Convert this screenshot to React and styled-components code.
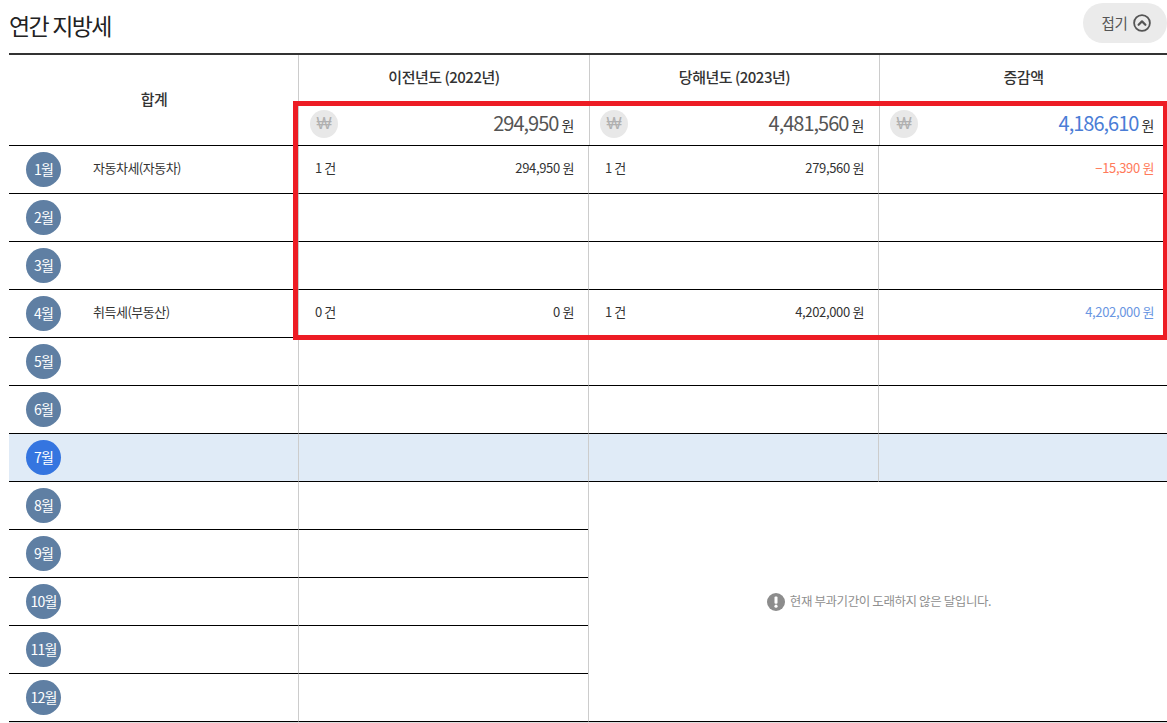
import React from "react";
import styled, { createGlobalStyle } from "styled-components";

const Global = createGlobalStyle`
  html, body { margin: 0; padding: 0; background: #fff; }
  body { font-family: "Noto Sans CJK KR", "Noto Sans", sans-serif; color: #333; overflow: hidden; }
  * { box-sizing: border-box; }
`;
const Page = styled.div`position: relative; width: 1167px; height: 723px; padding-left: 9px; overflow: hidden;`;
const TitleBar = styled.div`height: 53px; display: flex; justify-content: space-between; align-items: flex-start;`;
const Title = styled.h2`margin: 7px 0 0; font-size: 23px; line-height: 36px; font-weight: 400; color: #222; letter-spacing: -1.7px; word-spacing: 1px;`;
const FoldButton = styled.button`
  margin-top: 3px; width: 84px; height: 40px; border: 0; border-radius: 20px; background: #ebebeb;
  display: flex; align-items: center; justify-content: center; gap: 6px; padding: 0 0 0 3px;
  font: 400 14.5px "Noto Sans CJK KR", sans-serif; color: #555; letter-spacing: -0.4px;
`;
const FoldLabel = styled.span`margin-bottom: 2px;`;
const Head = styled.div`
  display: grid; grid-template-columns: 289px 291px 290px 288px; grid-template-rows: 46px 44px;
  border-top: 2px solid #333; border-bottom: 1px solid #000; box-sizing: content-box; height: 90px;
`;
const TotalHead = styled.div`
  grid-row: 1 / span 2; display: flex; align-items: center; justify-content: center;
  font-size: 15px; font-weight: 500; color: #333; padding: 0 0 3px 1px; letter-spacing: -0.5px;
`;
const ColHead = styled.div`
  border-left: 1px solid #ccc; display: flex; align-items: center; justify-content: center;
  font-size: 15px; font-weight: 500; color: #333; padding-bottom: 3px; letter-spacing: -0.5px;
`;
const SumCell = styled.div`
  border-left: 1px solid #ccc; display: flex; align-items: center; justify-content: space-between;
  padding: 2px ${p => (p.$last ? "13px" : "15px")} 0 ${p => (p.$first ? "11px" : "10px")};
`;
const WonBadge = styled.span`
  width: 28px; height: 28px; border-radius: 50%; background: #e8e8e8; color: #b0b0b0;
  display: flex; align-items: center; justify-content: center; font: 400 16px "Liberation Sans", sans-serif;
`;
const SumValue = styled.span`display: flex; align-items: baseline; gap: 3px; font-size: 14px; color: #333; margin-bottom: 4px; letter-spacing: -0.3px;`;
const SumNumber = styled.span`font-size: 20px; letter-spacing: -1px; color: ${p => p.$c || "#555"};`;
const Body = styled.div`
  display: grid; grid-template-columns: 289px 290px 290px 289px; grid-auto-rows: 48px; border-bottom: 1px solid #ddd;
`;
const MonthCell = styled.div`
  display: flex; align-items: center; padding-left: 17px; border-bottom: 1px solid #000;
  background: ${p => (p.$active ? "#e0ebf7" : "#fff")};
`;
const MonthBadge = styled.span`
  width: 35px; height: 35px; border-radius: 50%; flex: none; color: #fff; font-size: 14px; letter-spacing: -0.8px; padding-bottom: 2px;
  display: flex; align-items: center; justify-content: center; background: ${p => (p.$active ? "#3575e0" : "#5f7fa3")};
`;
const TaxName = styled.span`margin: 0 0 4px 32px; font-size: 13px; color: #333; letter-spacing: -0.5px;`;
const DataCell = styled.div`
  border-left: 1px solid #ccc; border-bottom: 1px solid #000; display: flex; align-items: center; justify-content: space-between;
  padding: 0 ${p => (p.$last ? "13px" : "14px")} 4px 16px; font-size: 13px; color: #333; letter-spacing: -0.35px;
  background: ${p => (p.$active ? "#e0ebf7" : "#fff")};
`;
const Count = styled.span`letter-spacing: -0.5px;`;
const Amount = styled.span`margin-left: auto; color: ${p => p.$c || "#333"};`;
const Notice = styled.div`
  grid-column: 3 / span 2; grid-row: 8 / span 5; border-left: 1px solid #ccc; border-bottom: 1px solid #000;
  display: flex; align-items: center; justify-content: center; gap: 5px; padding-left: 2px;
  font-size: 12.5px; color: #8f8f8f; letter-spacing: -0.4px;
`;
const NoticeText = styled.span`margin-bottom: 3px;`;
const Highlight = styled.div`
  position: absolute; left: 293px; top: 101px; width: 874px; height: 239px; border: 5px solid #ed1c24; border-right-width: 4px; pointer-events: none;
`;

const months = [
  { name: "자동차세(자동차)", a: ["1 건", "294,950 원"], b: ["1 건", "279,560 원"], d: ["−15,390 원", "#ff7a5a"] },
  {}, {},
  { name: "취득세(부동산)", a: ["0 건", "0 원"], b: ["1 건", "4,202,000 원"], d: ["4,202,000 원", "#6a96e2"] },
  {}, {}, { active: true }, {}, {}, {}, {}, {},
];

const Sum = ({ value, color, first, last }) => (
  <SumCell $first={first} $last={last}>
    <WonBadge>₩</WonBadge>
    <SumValue><SumNumber $c={color}>{value}</SumNumber>원</SumValue>
  </SumCell>
);

const Data = ({ v, active }) => (
  <DataCell $active={active}>
    {v && <Count>{v[0]}</Count>}
    {v && <Amount>{v[1]}</Amount>}
  </DataCell>
);

const Chevron = () => (
  <svg width="18" height="18" viewBox="0 0 18 18" fill="none" stroke="#555" strokeWidth="1.8">
    <circle cx="9" cy="9" r="7.9" />
    <path d="M5.6 10.8 9 7.4l3.4 3.4" strokeLinecap="round" strokeLinejoin="round" strokeWidth="2.2" />
  </svg>
);

const Alert = () => (
  <svg width="18" height="18" viewBox="0 0 18 18">
    <circle cx="9" cy="9" r="9" fill="#8c8c8c" />
    <rect x="7.5" y="3.4" width="3" height="7.4" rx="1" fill="#fff" />
    <circle cx="9" cy="13.2" r="1.6" fill="#fff" />
  </svg>
);

export default function App() {
  return (
    <Page>
      <Global />
      <TitleBar>
        <Title>연간 지방세</Title>
        <FoldButton><FoldLabel>접기</FoldLabel><Chevron /></FoldButton>
      </TitleBar>
      <Head>
        <TotalHead>합계</TotalHead>
        <ColHead>이전년도 (2022년)</ColHead>
        <ColHead>당해년도 (2023년)</ColHead>
        <ColHead>증감액</ColHead>
        <Sum value="294,950" first />
        <Sum value="4,481,560" />
        <Sum value="4,186,610" color="#4a7dd6" last />
      </Head>
      <Body>
        {months.map((m, i) => (
          <React.Fragment key={i}>
            <MonthCell $active={m.active}>
              <MonthBadge $active={m.active}>{i + 1}월</MonthBadge>
              {m.name && <TaxName>{m.name}</TaxName>}
            </MonthCell>
            <Data v={m.a} active={m.active} />
            {i < 7 && <Data v={m.b} active={m.active} />}
            {i < 7 && (
              <DataCell $active={m.active} $last>
                {m.d && <Amount $c={m.d[1]}>{m.d[0]}</Amount>}
              </DataCell>
            )}
          </React.Fragment>
        ))}
        <Notice><Alert /><NoticeText>현재 부과기간이 도래하지 않은 달입니다.</NoticeText></Notice>
      </Body>
      <Highlight />
    </Page>
  );
}
